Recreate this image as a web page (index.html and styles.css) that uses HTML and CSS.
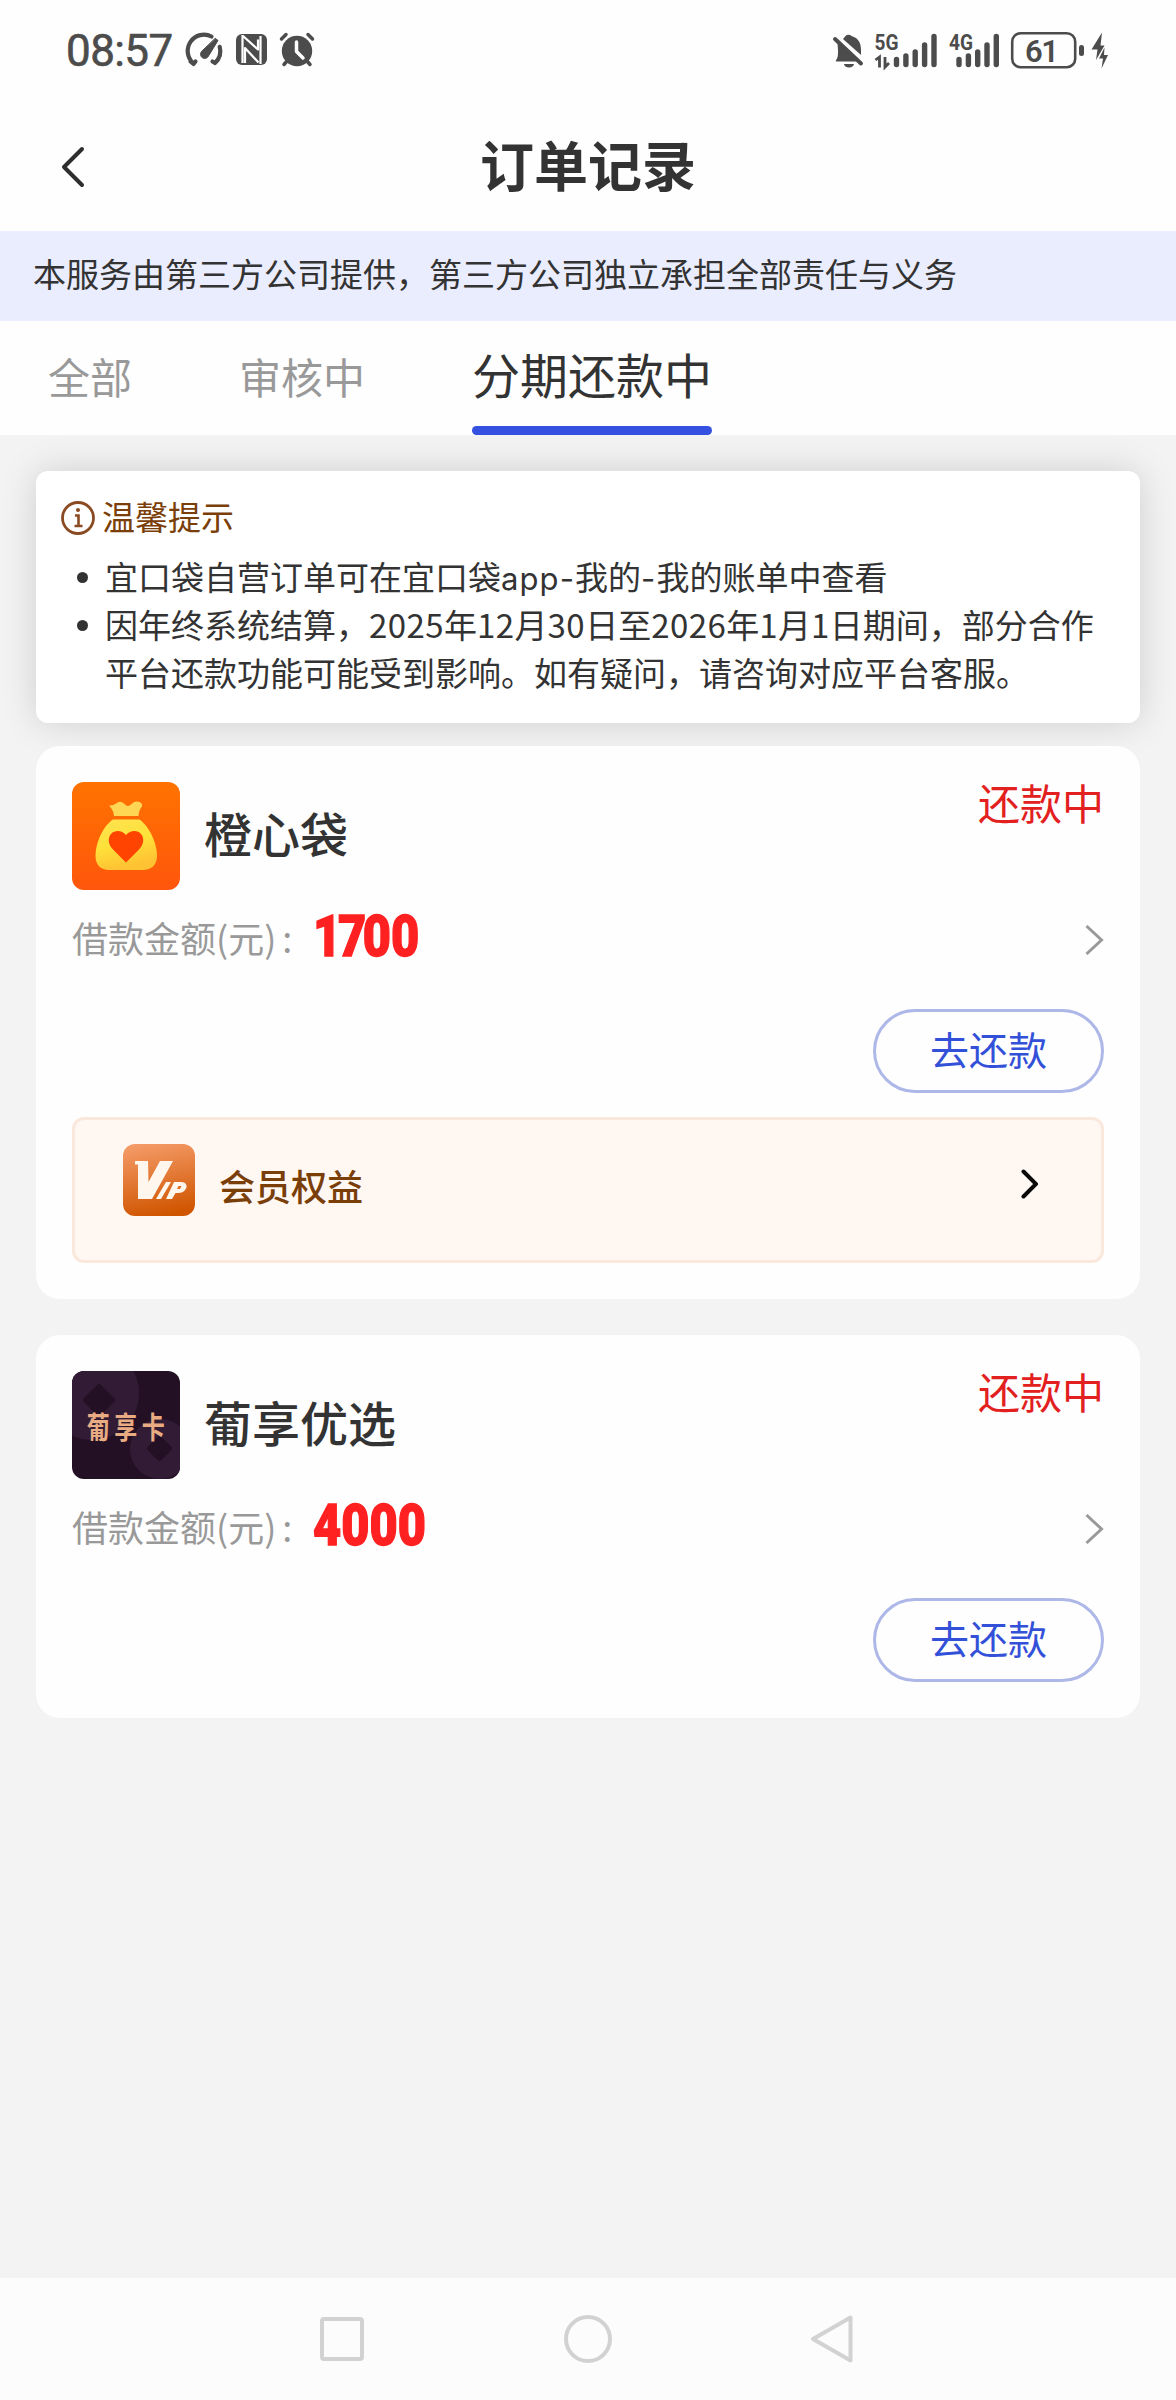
FILE: index.html
```html
<!DOCTYPE html>
<html lang="zh-CN">
<head>
<meta charset="utf-8">
<title>订单记录</title>
<link rel="stylesheet" href="styles.css">
</head>
<body>
<div class="screen">
  <div class="status-bar">
    <span class="clock">08:57</span>
    <svg class="status-left" width="134" height="40" viewBox="0 0 134 40" fill="none" stroke="#4c4c4c" stroke-linecap="round" stroke-linejoin="round">
      <path d="M7.500 30.500L10.500 33L12.500 30.500M10 32A16.300 16.300 0 0 1 28.500 5.500M36.700 15.800A16.300 16.300 0 0 1 32 32L29.500 30.500" stroke-width="4.200"/>
      <path d="M32.500 7.500L35 9.500L25.500 25A4.200 4.200 0 1 1 18.500 20.500Z" fill="#4c4c4c" stroke="#4c4c4c" stroke-width="1"/>
      <rect x="53" y="3" width="31" height="31" rx="6" fill="#4c4c4c" stroke="none"/>
      <path d="M59.500 4V32M60 5L75 18.500V8.500M62 32V17L75.500 31.500M77.500 5V33" stroke="#fff" stroke-width="2.200" stroke-linecap="butt"/>
      <circle cx="114" cy="20" r="15.200" fill="#4c4c4c" stroke="none"/>
      <path d="M98.500 8L103 3.500M129.500 8L125 3.500M104 30L101 33.500M124 30L127 33.500" stroke-width="3.500"/>
      <path d="M113.500 11V20.500L120 27" stroke="#fff" stroke-width="3.500"/>
    </svg>
    <svg class="status-right" width="280" height="40" viewBox="830 30 280 40" fill="#4c4c4c">
      <path d="M845.500 35a4 4 0 0 1 6 0c7 2 9.500 7 9.500 14v5L843 38zM837.500 42L858 60.500H836.500c-1 0-1-1 0-2 1.500-2 1.500-5 1.500-9z"/>
      <path d="M835 38L861 62.500" stroke="#4c4c4c" stroke-width="4" stroke-linecap="round"/>
      <path d="M844 63h10a5 3.500 0 0 1-10 0z"/>
      <text class="net-label" x="874.500" y="49" textLength="24" lengthAdjust="spacingAndGlyphs">5G</text>
      <path d="M875.500 59l4-3v10.500M885 56v10l4-4" fill="none" stroke="#4c4c4c" stroke-width="2.800"/>
      <g stroke="#4c4c4c" stroke-width="5.400" stroke-linecap="round">
        <path d="M896.500 58.500v5M905.900 55v8.500M915.200 51v12.500M924.600 44v19.500M934 35.500v28"/>
        <path d="M959 58.500v5M968.400 55v8.500M977.700 51v12.500M987 44v19.500M996.300 35.500v28"/>
      </g>
      <text class="net-label" x="949" y="49" textLength="24" lengthAdjust="spacingAndGlyphs">4G</text>
      <rect x="1012.200" y="32.200" width="63" height="34" rx="8.500" fill="none" stroke="#4c4c4c" stroke-width="2.600"/>
      <text class="battery-label" x="1025" y="61" textLength="34">61</text>
      <rect x="1079" y="44" width="5" height="11" rx="2.500"/>
      <path d="M1102 31.500L1091.500 48.500H1097.500L1096 59L1104.500 44.500H1100.500z"/>
      <path d="M1104.500 46.500L1099 57.500H1103L1101.500 67.500L1108 54H1104z"/>
    </svg>
  </div>

  <header class="title-bar">
    <svg class="back" width="24" height="42" viewBox="0 0 24 42"><path d="M21 3L3 21L21 39" fill="none" stroke="#2e2e2e" stroke-width="4" stroke-linecap="round" stroke-linejoin="round"/></svg>
    <h1 class="title">订单记录</h1>
  </header>

  <p class="provider">本服务由第三方公司提供，第三方公司独立承担全部责任与义务</p>

  <nav class="tabs">
    <span class="tab">全部</span>
    <span class="tab">审核中</span>
    <span class="tab tab-active">分期还款中</span>
  </nav>

  <main class="content">
    <section class="notice">
      <div class="notice-head">
        <svg width="36" height="36" viewBox="0 0 36 36" fill="none" stroke="#8a4a22"><circle cx="18" cy="18" r="15.500" stroke-width="2.800"/><path d="M15 15.500H18.500V26M14.500 26H22.500" stroke-width="2.600"/><circle cx="18" cy="10" r="2" fill="#8a4a22" stroke="none"/></svg>
        <span>温馨提示</span>
      </div>
      <ul class="notice-list">
        <li>宜口袋自营订单可在宜口袋<span class="latin">app-</span>我的<span class="latin">-</span>我的账单中查看</li>
        <li>因年终系统结算，<span class="num">2025</span>年<span class="num">12</span>月<span class="num">30</span>日至<span class="num">2026</span>年<span class="num">1</span>月<span class="num">1</span>日期间，部分合作<br>平台还款功能可能受到影响。如有疑问，请咨询对应平台客服。</li>
      </ul>
    </section>

    <article class="order">
      <div class="order-head">
        <svg class="logo" width="108" height="108" viewBox="0 0 108 108">
          <defs>
            <linearGradient id="orange" x1="0" y1="0" x2="0" y2="1"><stop offset="0" stop-color="#ff7300"/><stop offset="1" stop-color="#ff560c"/></linearGradient>
            <linearGradient id="bag" x1="0" y1="0" x2="0.300" y2="1"><stop offset="0" stop-color="#ffe34f"/><stop offset="0.550" stop-color="#ffe13a"/><stop offset="1" stop-color="#ffc233"/></linearGradient>
          </defs>
          <rect width="108" height="108" rx="12" fill="url(#orange)"/>
          <path d="M37 23.500Q41 24 44 21.500Q48 18 52 21.500Q55.500 26 59.500 22Q63 18.500 67.500 20Q72 22 69 26Q67 28 66.500 34H42Q42 29 37 23.500Z" fill="#ffd554"/>
          <path d="M41 37.500H67.500C77 44 85 61 85 74C85 83 79 88 71 88H37C29 88 23.500 83 23.500 74C23.500 61 31 44 41 37.500Z" fill="url(#bag)"/>
          <path d="M54 80.500L41 67.500C36 62.500 35.500 56 39 52C43.500 47.500 50 48.500 54 53C58 48.500 65 47.500 69 52C72.500 56 72 62.500 67 67.500Z" fill="#ff4300"/>
        </svg>
        <h2 class="name">橙心袋</h2>
        <span class="state">还款中</span>
      </div>
      <div class="amount-row">
        <span class="label">借款金额(元)<span class="colon">:</span></span>
        <span class="amount"><span class="tight">17</span>00</span>
        <svg class="arrow" width="20" height="32" viewBox="0 0 20 32"><path d="M2.500 2L17.500 16L2.500 30" fill="none" stroke="#999" stroke-width="3"/></svg>
      </div>
      <div class="actions"><button class="repay">去还款</button></div>
      <div class="vip">
        <svg class="vip-logo" width="72" height="72" viewBox="0 0 72 72">
          <defs><linearGradient id="copper" x1="0.300" y1="0" x2="0.500" y2="1"><stop offset="0" stop-color="#f49a66"/><stop offset="1" stop-color="#d05500"/></linearGradient></defs>
          <rect width="72" height="72" rx="12" fill="url(#copper)"/>
          <path d="M12 17H25L25.500 38L37 17H50L29 55H15V20.500H12Z" fill="#fff6ee"/>
          <path d="M43 38H48L38 55H33Z" fill="#fff6ee"/>
          <path d="M51 38H58C64 38 65 43 62 46C60 49 56 49 52.500 49L49 55H43Z" fill="#fff6ee"/>
          <path d="M55.500 42H58.500L57 45H54Z" fill="#e06d22"/>
        </svg>
        <span class="vip-text">会员权益</span>
        <svg class="vip-arrow" width="18" height="30" viewBox="0 0 18 30"><path d="M3.500 2.500L16 15L3.500 27.500" fill="none" stroke="#0a0a0a" stroke-width="4" stroke-linecap="round"/></svg>
      </div>
    </article>

    <article class="order">
      <div class="order-head">
        <div class="logo card-logo">
          <svg width="108" height="108" viewBox="0 0 108 108">
            <circle cx="20" cy="22" r="47" fill="#321b34"/>
            <circle cx="88" cy="78" r="30" fill="#321b34"/>
            <rect x="15" y="17" width="24" height="24" rx="2" transform="rotate(45 27 29)" fill="#231025"/>
            <rect x="78" y="68" width="19" height="19" rx="2" transform="rotate(45 87.500 77.500)" fill="#231025"/>
          </svg>
          <span class="card-logo-text">葡享卡</span>
        </div>
        <h2 class="name">葡享优选</h2>
        <span class="state">还款中</span>
      </div>
      <div class="amount-row">
        <span class="label">借款金额(元)<span class="colon">:</span></span>
        <span class="amount">4000</span>
        <svg class="arrow" width="20" height="32" viewBox="0 0 20 32"><path d="M2.500 2L17.500 16L2.500 30" fill="none" stroke="#999" stroke-width="3"/></svg>
      </div>
      <div class="actions"><button class="repay">去还款</button></div>
    </article>
  </main>

  <footer class="nav-bar">
    <svg width="48" height="52" viewBox="0 0 48 52"><rect x="4" y="6" width="40" height="40" rx="2" fill="none" stroke="#d2d2d2" stroke-width="4"/></svg>
    <svg width="52" height="52" viewBox="0 0 52 52"><circle cx="26" cy="26" r="22" fill="none" stroke="#d2d2d2" stroke-width="4"/></svg>
    <svg width="48" height="52" viewBox="0 0 48 52"><path d="M40.500 4.500V47.500L3 26Z" fill="none" stroke="#d2d2d2" stroke-width="4" stroke-linejoin="round"/></svg>
  </footer>
</div>
</body>
</html>
```
FILE: styles.css
```css
* { box-sizing: border-box; margin: 0; padding: 0; }
body {
  background: #f3f3f3;
  color: #333;
  font-family: "Noto Sans CJK SC", sans-serif;
}
svg { display: block; flex: none; }
.screen {
  width: 1176px;
  height: 2400px;
  display: flex;
  flex-direction: column;
}

.status-bar {
  height: 102px;
  padding: 0 66px;
  display: flex;
  align-items: center;
  background: #fefefe;
  color: #4c4c4c;
}
.clock {
  width: 117px;
  font: 400 44px/50px Roboto, sans-serif;
  letter-spacing: -0.6px;
  -webkit-text-stroke: 0.6px #4c4c4c;
}
.status-right { margin-left: auto; }
.net-label { font: 700 22px Roboto, sans-serif; }
.battery-label { font: 600 31px Roboto, sans-serif; }

.title-bar {
  height: 129px;
  padding: 0 61px;
  display: flex;
  align-items: center;
  background: #fefefe;
}
.back { width: 24px; }
.title {
  flex: 1;
  text-align: center;
  padding: 0 24px 6px 0;
  font-size: 54px;
  line-height: 80px;
  font-weight: 700;
}

.provider {
  height: 90px;
  padding-left: 33px;
  background: #eaedfd;
  font-size: 33px;
  line-height: 84px;
}

.tabs {
  height: 114px;
  padding-left: 48px;
  display: flex;
  background: #fefefe;
}
.tab {
  margin-right: 107px;
  font-size: 42px;
  line-height: 110px;
  color: #999;
}
.tab-active {
  margin: 0;
  font-size: 48px;
  line-height: 105px;
  color: #333;
  display: flex;
  flex-direction: column;
}
.tab-active::after {
  content: "";
  height: 9px;
  border-radius: 5px;
  background: #3450e0;
}

.content {
  flex: 1;
  padding: 36px;
}
.notice {
  height: 252px;
  padding: 21px 24px 0;
  border-radius: 12px;
  background: #fff;
  box-shadow: 0 0 36px rgba(0, 0, 0, 0.15);
  font-size: 33px;
}
.notice-head {
  height: 52px;
  display: flex;
  align-items: center;
  gap: 6px;
  color: #7a3e08;
}
.notice-head span { padding-bottom: 4px; }
.notice-list {
  margin-top: 8px;
  padding-left: 45px;
  list-style: none;
}
.notice-list li {
  line-height: 48px;
  white-space: nowrap;
  display: block;
}
.notice-list li::before {
  content: "";
  float: left;
  width: 11px;
  height: 11px;
  margin: 20px 17px 0 -28px;
  border-radius: 50%;
  background: #333;
}
.latin {
  font-family: Inter, sans-serif;
  font-size: 31px;
  line-height: 1;
  letter-spacing: 1.1px;
}
.num { letter-spacing: 0.45px; }

.order {
  margin-top: 36px;
  padding: 36px;
  border-radius: 24px;
  background: #fefefe;
}
.notice + .order { margin-top: 23px; position: relative; }
.order-head {
  height: 108px;
  display: flex;
  align-items: center;
}
.logo { width: 108px; height: 108px; }
.card-logo {
  display: grid;
  place-items: center;
  overflow: hidden;
  border-radius: 12px;
  background: #231025;
}
.card-logo > * { grid-area: 1 / 1; }
.card-logo-text {
  padding-left: 4px;
  color: #e9ac82;
  font-size: 23px;
  line-height: 30px;
  font-weight: 700;
  letter-spacing: 4.5px;
  transform: scaleY(1.3);
}
.name {
  margin: 0 auto 9px 24px;
  font-size: 48px;
  line-height: 70px;
  font-weight: 500;
}
.state {
  align-self: flex-start;
  color: #e32020;
  font-size: 42px;
  line-height: 40px;
}
.amount-row {
  height: 99px;
  display: flex;
  align-items: center;
}
.label {
  width: 241px;
  padding-bottom: 5px;
  color: #999;
  font-size: 36px;
  line-height: 52px;
}
.colon { margin-left: 6px; }
.amount {
  margin-bottom: 7px;
  color: #ff2121;
  font: 900 58px/60px Roboto, sans-serif;
  -webkit-text-stroke: 1.4px #ff2121;
  transform-origin: left center;
  transform: scaleX(0.84);
}
.tight { letter-spacing: -4px; }
.arrow { margin-left: auto; }
.actions {
  display: flex;
  justify-content: flex-end;
  padding-top: 20px;
}
.repay {
  width: 231px;
  height: 84px;
  padding-bottom: 6px;
  border: 3px solid #adb7e8;
  border-radius: 42px;
  background: transparent;
  color: #3350d8;
  font: 400 39px/56px "Noto Sans CJK SC", sans-serif;
}
.vip {
  height: 146px;
  margin-top: 24px;
  padding: 24px 63px 0 48px;
  display: flex;
  border: 3px solid #fae8dd;
  border-radius: 12px;
  background: #fff7f1;
}
.vip-text {
  margin-left: 24px;
  color: #7a3e08;
  font-size: 36px;
  font-weight: 500;
  line-height: 82px;
}
.vip-arrow { margin: 25px 0 0 auto; }

.nav-bar {
  height: 122px;
  display: flex;
  align-items: center;
  justify-content: center;
  gap: 196px;
  background: #fcfcfc;
}
```
